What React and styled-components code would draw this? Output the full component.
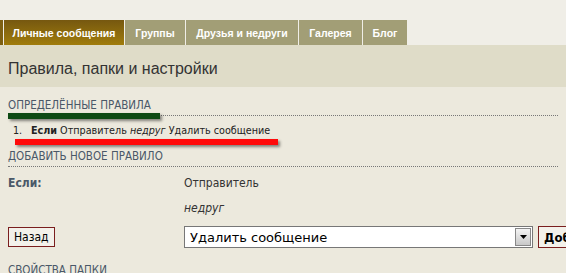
import styled, { createGlobalStyle } from "styled-components";

const GlobalStyle = createGlobalStyle`
  html, body {
    margin: 0;
    padding: 0;
    background: #ece9dd;
  }
  body {
    font-family: "DejaVu Sans Condensed", "DejaVu Sans", sans-serif;
    color: #333;
  }
`;

const tabs = [
  { label: "Личные сообщения", width: 120 },
  { label: "Группы", width: 60 },
  { label: "Друзья и недруги", width: 112 },
  { label: "Галерея", width: 63 },
  { label: "Блог", width: 44 },
];

const App = () => {
  return (
    <Page>
      <GlobalStyle />
      <TopBar>
        <TabStrip>
          <Edge />
          {tabs.map((t, i) => (
            <Tab key={t.label} active={i === 0} w={t.width}>
              {t.label}
            </Tab>
          ))}
        </TabStrip>
      </TopBar>
      <TitleBar>
        <Title>Правила, папки и настройки</Title>
      </TitleBar>
      <Content>
        <Section gap={12}>
          <Heading>ОПРЕДЕЛЁННЫЕ ПРАВИЛА</Heading>
          <RuleList>
            <Rule>
              <Num>1.</Num>
              <span>
                <b>Если</b> Отправитель <i>недруг</i> Удалить сообщение
              </span>
            </Rule>
          </RuleList>
        </Section>
        <Section gap={15}>
          <Heading>ДОБАВИТЬ НОВОЕ ПРАВИЛО</Heading>
          <FormGrid>
            <Label>Если:</Label>
            <Value>Отправитель</Value>
            <span />
            <Value><i>недруг</i></Value>
            <Cell>
              <Button>Назад</Button>
            </Cell>
            <Cell>
              <Select>
                <span>Удалить сообщение</span>
                <Arrow>
                  <svg width="7" height="4" viewBox="0 0 7 4">
                    <path d="M0 0h7L3.5 4z" fill="#000" />
                  </svg>
                </Arrow>
              </Select>
              <Button bold>Добавить</Button>
            </Cell>
          </FormGrid>
        </Section>
        <Heading>СВОЙСТВА ПАПКИ</Heading>
      </Content>
      <Marker color="#0e4a14" style={{ left: 8, top: 113, width: 152 }} />
      <Marker color="#ff0a0a" style={{ left: 15, top: 139, width: 263 }} />
    </Page>
  );
};
export default App;

// Styles
const Page = styled.div`
  position: relative;
  width: 566px;
  height: 273px;
  overflow: hidden;
`;

const TopBar = styled.div`
  background: #f0eee7;
  padding-top: 20px;
`;

const TabStrip = styled.div`
  display: flex;
  height: 25px;
  gap: 1px;
`;

const Edge = styled.div`
  width: 3px;
  background: #7e6012;
`;

const Tab = styled.div`
  display: flex;
  align-items: center;
  justify-content: center;
  width: ${(p) => p.w}px;
  font-family: "Liberation Sans", Arial, sans-serif;
  font-size: 10.5px;
  font-weight: bold;
  color: #fff;
  white-space: nowrap;
  background: ${(p) =>
    p.active ? "linear-gradient(#765810, #a07c0c)" : "#a29e76"};
`;

const TitleBar = styled.div`
  background: #dfdcc8;
  height: 42px;
  box-sizing: border-box;
  padding: 6px 0 0 8px;
  display: flex;
  align-items: center;
`;

const Title = styled.h1`
  margin: 0;
  font-family: "Liberation Sans", Arial, sans-serif;
  font-weight: normal;
  font-size: 16px;
  color: #333;
`;

const Content = styled.div`
  padding: 11px 8px 0;
`;

const Section = styled.div`
  margin-bottom: ${(p) => p.gap}px;
`;

const Heading = styled.h2`
  margin: 0;
  font-size: 11.5px;
  font-weight: normal;
  color: #4a5868;
  padding-bottom: 3px;
  border-bottom: 1px dotted #777;
`;

const RuleList = styled.ol`
  list-style: none;
  margin: 8px 0 0;
  padding-left: 5px;
  font-size: 10.7px;
  color: #222;
`;

const Rule = styled.li`
  display: flex;
`;

const Num = styled.span`
  width: 18px;
`;

const FormGrid = styled.div`
  display: grid;
  grid-template-columns: 176px 1fr;
  row-gap: 11px;
  padding-top: 9px;
  font-size: 12px;
`;

const Label = styled.span`
  font-weight: bold;
  color: #4a5868;
`;

const Value = styled.span`
  color: #333;
`;

const Cell = styled.div`
  display: flex;
  align-items: center;
  gap: 5px;
`;

const Button = styled.button`
  font-family: inherit;
  font-size: ${(p) => (p.bold ? "13px" : "12px")};
  font-weight: ${(p) => (p.bold ? "bold" : "normal")};
  color: #000;
  background: #f3f1ea;
  border: 1px solid #7a1e1e;
  height: ${(p) => (p.bold ? "22px" : "20px")};
  padding: 0 5px;
  white-space: nowrap;
`;

const Select = styled.div`
  box-sizing: border-box;
  width: 349px;
  height: 22px;
  border: 1px solid #777;
  background: #fff;
  display: flex;
  align-items: center;
  justify-content: space-between;
  padding: 0 1px 0 5px;
  font-family: "DejaVu Sans", sans-serif;
  font-size: 13px;
  color: #000;
`;

const Arrow = styled.div`
  width: 16px;
  height: 18px;
  box-sizing: border-box;
  border: 1px solid #888;
  background: linear-gradient(#f4f4f4, #c8c8c8);
  display: flex;
  align-items: center;
  justify-content: center;
`;

const Marker = styled.div`
  position: absolute;
  height: 6px;
  background: ${(p) => p.color};
  box-shadow: 2px 2px 3px rgba(0, 0, 0, 0.45);
`;
